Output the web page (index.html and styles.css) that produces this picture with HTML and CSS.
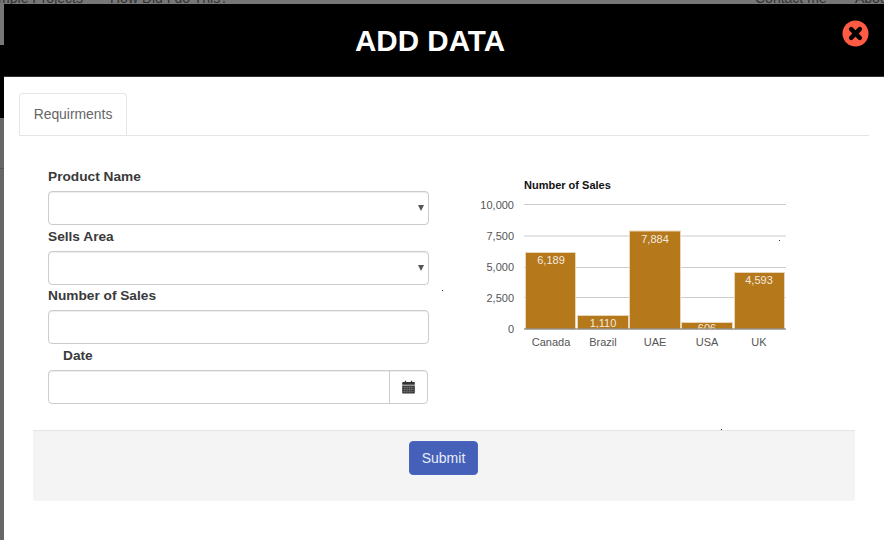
FILE: index.html
```html
<!DOCTYPE html>
<html lang="en">
<head>
    <meta charset="UTF-8">
    <title>Add Data</title>
    <link rel="stylesheet" href="styles.css">
</head>
<body>

    <!-- Page behind the modal -->
    <div class="backdrop">
        <div class="back-nav">
            <span class="back-left">Sample Projects</span>
            <span class="back-how">How Did I do This?</span>
            <span class="back-contact">Contact me</span>
            <span class="back-about">About</span>
        </div>
        <div class="back-black"></div>
        <div class="back-lower"></div>
        <div class="back-line"></div>
    </div>

    <div class="modal">
        <div class="modal-header">
            <h1>ADD DATA</h1>
            <svg class="close-icon" viewBox="0 0 28 28" width="27" height="27">
                <circle cx="14" cy="14" r="13.5" fill="#ff5a43"/>
                <path d="M9.5 9.5 L18.500 18.500 M18.500 9.500 L9.500 18.500" stroke="#000" stroke-width="4.6" stroke-linecap="round"/>
            </svg>
        </div>

        <div class="modal-body">
            <div class="tabs">
                <div class="tab">Requirments</div>
            </div>

            <div class="content">
                <form class="data-form">
                    <label>Product Name</label>
                    <div class="field select-field"></div>
                    <label>Sells Area</label>
                    <div class="field select-field sells-field"></div>
                    <label>Number of Sales</label>
                    <div class="field"></div>
                    <label class="date-label">Date</label>
                    <div class="field date-field">
                        <span class="date-addon">
                            <svg viewBox="0 0 14 15" width="13" height="14">
                                <path d="M1 2.2h2V0.8h1.4v1.4h5.2V0.8H11v1.4h2a.8.8 0 0 1 .8.8v2H.2V3a.8.8 0 0 1 .8-.8z" fill="#333"/>
                                <path d="M.2 6h13.6v7.6a.8.8 0 0 1-.8.8H1a.8.8 0 0 1-.8-.8z" fill="#333"/>
                                <path d="M.5 8.2h13M.5 10.2h13M.5 12.2h13M3 6v8M5.5 6v8M8 6v8M10.5 6v8" stroke="#8a8a8a" stroke-width=".5"/>
                            </svg>
                        </span>
                    </div>
                </form>

                <div class="chart">
                    <svg viewBox="0 0 330 190" width="330" height="190">
                        <text class="chart-title" x="54" y="19">Number of Sales</text>

                        <line class="grid" x1="54" y1="34.500" x2="316" y2="34.500"/>
                        <line class="grid" x1="54" y1="66" x2="316" y2="66"/>
                        <line class="grid" x1="54" y1="97.500" x2="316" y2="97.500"/>
                        <line class="grid" x1="54" y1="127.500" x2="316" y2="127.500"/>

                        <text class="axis" x="44" y="39" text-anchor="end">10,000</text>
                        <text class="axis" x="44" y="70" text-anchor="end">7,500</text>
                        <text class="axis" x="44" y="101" text-anchor="end">5,000</text>
                        <text class="axis" x="44" y="132" text-anchor="end">2,500</text>
                        <text class="axis" x="44" y="163" text-anchor="end">0</text>

                        <rect class="bar" x="55.500" y="82.500" width="50" height="76.500"/>
                        <rect class="bar" x="107.500" y="145.500" width="51" height="13.500"/>
                        <rect class="bar" x="159.500" y="61" width="51" height="98"/>
                        <rect class="bar" x="211.500" y="152.500" width="51" height="6.500"/>
                        <rect class="bar" x="264.500" y="102.500" width="50" height="56.500"/>

                        <text class="bar-label" x="81" y="94" text-anchor="middle">6,189</text>
                        <text class="bar-label" x="133" y="157" text-anchor="middle">1,110</text>
                        <text class="bar-label" x="185" y="73" text-anchor="middle">7,884</text>
                        <svg x="211" y="152" width="52" height="7" viewBox="211 152 52 7">
                            <text class="bar-label" x="237" y="162" text-anchor="middle">606</text>
                        </svg>
                        <text class="bar-label" x="289" y="114" text-anchor="middle">4,593</text>

                        <line class="baseline" x1="54" y1="159" x2="316" y2="159"/>

                        <text class="axis" x="81" y="176" text-anchor="middle">Canada</text>
                        <text class="axis" x="133" y="176" text-anchor="middle">Brazil</text>
                        <text class="axis" x="185" y="176" text-anchor="middle">UAE</text>
                        <text class="axis" x="237" y="176" text-anchor="middle">USA</text>
                        <text class="axis" x="289" y="176" text-anchor="middle">UK</text>
                    </svg>
                </div>
            </div>

            <div class="modal-footer">
                <button type="button" class="submit-btn">Submit</button>
            </div>
        </div>
    </div>

    <!-- Stray dots that sit over the modal -->
    <i class="speck speck-a"></i>
    <i class="speck speck-b"></i>
    <i class="speck speck-c"></i>

</body>
</html>
```

FILE: styles.css
```css
html, body {
    margin: 0;
    padding: 0;
    height: 100%;
    overflow: hidden;
    background: #fff;
    font-family: "Liberation Sans", Arial, sans-serif;
}

/* Dimmed page behind the modal */
.backdrop {
    position: absolute;
    top: 0;
    left: 0;
    width: 100%;
    height: 540px;
    background: #777;
    overflow: hidden;
}

.back-nav {
    position: relative;
    height: 4px;
    font-size: 14px;
    color: #333;
    line-height: 4px;
}

.back-nav span {
    position: absolute;
    top: -4px;
    white-space: nowrap;
}

.back-left { left: -19px; }
.back-how { left: 110px; }
.back-contact { left: 755px; }
.back-about { left: 855px; }

.back-black {
    position: absolute;
    top: 45px;
    left: 0;
    width: 4px;
    height: 73px;
    background: #000;
}

.back-lower {
    position: absolute;
    top: 118px;
    left: 0;
    width: 4px;
    height: 422px;
    background: #666;
}

.back-line {
    position: absolute;
    top: 168px;
    left: 0;
    width: 4px;
    height: 1px;
    background: #555;
}

/* Modal */
.modal {
    position: absolute;
    top: 4px;
    left: 4px;
    right: 0;
    bottom: 6px;
    background: #fff;
}

.modal-header {
    position: relative;
    height: 72px;
    padding-right: 28px;
    background: #000;
    border-bottom: 1px solid #333;
    display: flex;
    align-items: center;
    justify-content: center;
}

.modal-header h1 {
    margin: 2px 0 0 0;
    font-size: 29.6px;
    font-weight: 700;
    color: #fff;
}

.close-icon {
    position: absolute;
    top: 16px;
    right: 15px;
}

.modal-body {
    padding: 16px 15px 0 15px;
}

/* Tabs */
.tabs {
    height: 42px;
    border-bottom: 1px solid #e5e5e5;
    display: flex;
}

.tab {
    height: 42px;
    width: 108px;
    box-sizing: border-box;
    border: 1px solid #e5e5e5;
    border-bottom: 1px solid #fff;
    border-radius: 4px 4px 0 0;
    background: #fff;
    color: #666;
    font-size: 13.9px;
    line-height: 40px;
    text-align: center;
}

/* Form + chart */
.content {
    display: flex;
    height: 294px;
    padding-left: 29px;
}

.data-form {
    width: 381px;
    padding-top: 32px;
}

.data-form label {
    display: block;
    height: 16px;
    line-height: 18px;
    font-size: 13.7px;
    font-weight: 700;
    color: #3a3a3a;
}

.date-label {
    padding-left: 15px;
}

.field {
    position: relative;
    box-sizing: border-box;
    width: 381px;
    height: 34px;
    margin: 7px 0 3px 0;
    background: #fff;
    border: 1px solid #ccc;
    border-radius: 4px;
    box-shadow: inset 0 1px 1px rgba(0, 0, 0, .075);
}

.sells-field {
    margin-bottom: 2px;
}

.select-field::after {
    content: "";
    position: absolute;
    top: 13px;
    right: 4px;
    border-left: 3px solid transparent;
    border-right: 3px solid transparent;
    border-top: 6px solid #555;
}

.date-field {
    width: 380px;
    display: flex;
    justify-content: flex-end;
}

.date-addon {
    box-sizing: border-box;
    width: 38px;
    border-left: 1px solid #ccc;
    display: flex;
    align-items: center;
    justify-content: center;
}

.chart {
    margin-left: 41px;
    padding-top: 34px;
    width: 330px;
}

.chart svg {
    display: block;
}

.chart-title {
    font-size: 11px;
    font-weight: 700;
    fill: #111;
}

.axis {
    font-size: 11px;
    fill: #555;
}

.grid {
    stroke: #ccc;
    stroke-width: 1;
}

.baseline {
    stroke: #6a6a6a;
    stroke-width: 1;
}

.bar {
    fill: #b5781b;
    stroke: #e9d6ba;
    stroke-width: 1;
}

.bar-label {
    font-size: 11px;
    fill: #fff;
    opacity: .85;
}

/* Footer */
.modal-footer {
    height: 71px;
    margin: 0 14px;
    background: #f4f4f4;
    border-top: 1px solid #e5e5e5;
    border-radius: 0 0 3px 3px;
    display: flex;
    justify-content: center;
    padding-top: 10px;
    box-sizing: border-box;
}

.submit-btn {
    width: 69px;
    height: 34px;
    margin-right: 1px;
    background: #4560b9;
    border: 1px solid #4a66c0;
    border-radius: 4px;
    color: #e9edf8;
    font-family: inherit;
    font-size: 14px;
}

/* Dots */
.speck {
    position: absolute;
    width: 1px;
    height: 1px;
    background: #333;
}

.speck-a { left: 442px; top: 290px; }
.speck-b { left: 779px; top: 240px; }
.speck-c { left: 721px; top: 429px; }
```
